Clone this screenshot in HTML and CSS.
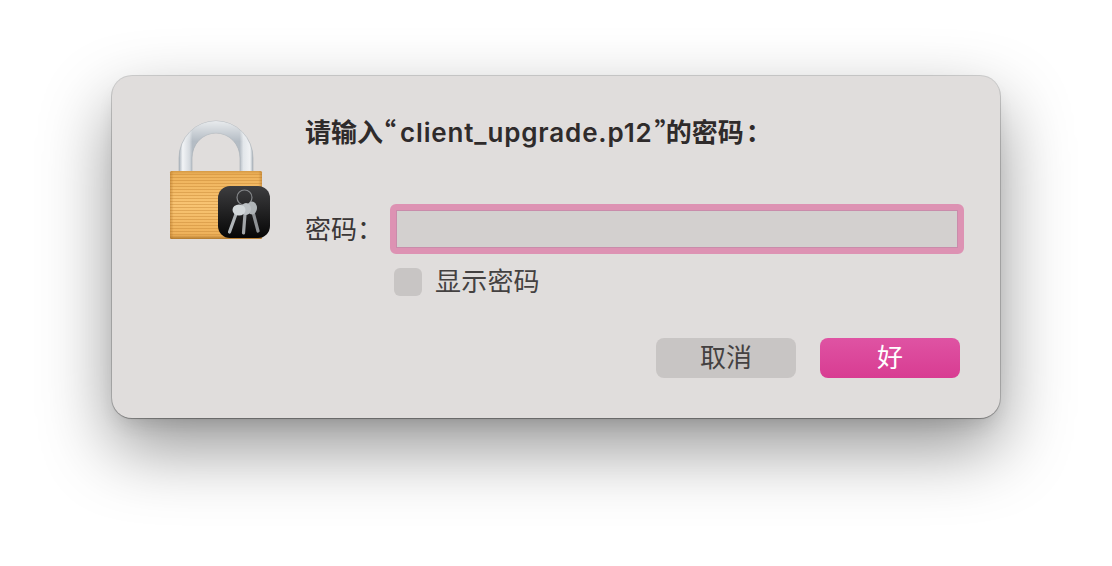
FILE: index.html
```html
<!DOCTYPE html>
<html lang="zh-CN">
<head>
  <meta charset="UTF-8">
  <title>请输入密码</title>
  <link rel="stylesheet" href="styles.css">
</head>
<body>
  <div class="dialog">
    <svg class="lock-icon" viewBox="165 118 110 125" width="110" height="125">
      <defs>
        <linearGradient id="shackle" x1="0" y1="0" x2="1" y2="0">
          <stop offset="0" stop-color="#a9b2bb"/>
          <stop offset="0.05" stop-color="#f2f4f6"/>
          <stop offset="0.14" stop-color="#d6dbe0"/>
          <stop offset="0.18" stop-color="#b4bcc4"/>
          <stop offset="0.82" stop-color="#b4bcc4"/>
          <stop offset="0.87" stop-color="#e2e6ea"/>
          <stop offset="0.96" stop-color="#f0f2f4"/>
          <stop offset="1" stop-color="#a9b2bb"/>
        </linearGradient>
        <linearGradient id="shackleTop" x1="0" y1="0" x2="0" y2="1">
          <stop offset="0" stop-color="#ffffff" stop-opacity="0.7"/>
          <stop offset="0.4" stop-color="#ffffff" stop-opacity="0"/>
        </linearGradient>
        <linearGradient id="body" x1="0" y1="0" x2="0" y2="1">
          <stop offset="0" stop-color="#d59a45"/>
          <stop offset="0.05" stop-color="#eeb25a"/>
          <stop offset="0.5" stop-color="#f8c473"/>
          <stop offset="0.94" stop-color="#eeb15a"/>
          <stop offset="1" stop-color="#b27a2e"/>
        </linearGradient>
        <linearGradient id="bodyEdge" x1="0" y1="0" x2="1" y2="0">
          <stop offset="0" stop-color="#a96c22" stop-opacity="0.45"/>
          <stop offset="0.04" stop-color="#a96c22" stop-opacity="0"/>
          <stop offset="0.96" stop-color="#a96c22" stop-opacity="0"/>
          <stop offset="1" stop-color="#a96c22" stop-opacity="0.45"/>
        </linearGradient>
        <linearGradient id="badge" x1="0" y1="0" x2="0" y2="1">
          <stop offset="0" stop-color="#3d3d3f"/>
          <stop offset="1" stop-color="#060606"/>
        </linearGradient>
        <pattern id="stripes" width="3" height="3" patternUnits="userSpaceOnUse">
          <rect width="3" height="1" fill="#c07f2e" fill-opacity="0.4"/>
        </pattern>
      </defs>
      <path d="M179 172V158a37 37 0 0 1 74 0V172H240V158a24 25 0 0 0-48 0V172Z" fill="url(#shackle)" stroke="#a4acb4" stroke-width="0.6"/>
      <path d="M179 172V158a37 37 0 0 1 74 0V172H240V158a24 25 0 0 0-48 0V172Z" fill="url(#shackleTop)"/>
      <rect x="170" y="171" width="92" height="68" rx="1.5" fill="url(#body)"/>
      <rect x="170" y="174" width="92" height="61" fill="url(#stripes)"/>
      <rect x="170" y="171" width="92" height="68" rx="1.5" fill="url(#bodyEdge)"/>
      <rect x="218" y="186" width="52" height="52" rx="12" fill="url(#badge)"/>
      <circle cx="244.500" cy="197.500" r="7.500" fill="none" stroke="#85878a" stroke-width="1.200"/>
      <path d="M253 212L258 231" stroke="#8e9295" stroke-width="3.200" stroke-linecap="round"/>
      <ellipse cx="252" cy="208" rx="5" ry="6.500" fill="#aeb3b6"/>
      <path d="M245 214L243.500 233" stroke="#a2a6a9" stroke-width="3.200" stroke-linecap="round"/>
      <ellipse cx="246" cy="209" rx="5" ry="6" fill="#bcc1c4"/>
      <path d="M236 214L229.500 232" stroke="#b0b5b8" stroke-width="3.200" stroke-linecap="round"/>
      <ellipse cx="239" cy="210" rx="6.500" ry="5.500" fill="#d3d8da"/>
    </svg>
    <form class="prompt">
      <h1 class="prompt-title">请输入<span class="quote quote-open">“</span><span class="file-name">client_upgrade.p12</span><span class="quote quote-close">”</span>的密码<span class="colon title-colon">：</span></h1>
      <div class="field-row">
        <label class="field-label" for="pw">密码<span class="colon">：</span></label>
        <span class="focus-ring"><input class="pw-input" id="pw" type="password"></span>
      </div>
      <label class="check-row">
        <span class="check-box"></span>
        <span class="check-text">显示密码</span>
      </label>
      <div class="actions">
        <button class="btn" type="button">取消</button>
        <button class="btn btn-primary" type="button">好</button>
      </div>
    </form>
  </div>
</body>
</html>
```

FILE: styles.css
```css
html, body {
  height: 100%;
}
body {
  margin: 0;
  padding: 76px 112px 0;
  box-sizing: border-box;
  background-color: #ffffff;
  overflow: hidden;
  font-family: "Noto Sans CJK SC", sans-serif;
  color: #2f2b2b;
}
.dialog {
  display: flex;
  align-items: flex-start;
  width: 888px;
  height: 342px;
  box-sizing: border-box;
  padding: 0 36px 0 53px;
  background-color: #e0dddc;
  border-radius: 20px;
  box-shadow: 0 0 0 1px rgba(0, 0, 0, 0.16), 0 1px 1px rgba(0, 0, 0, 0.2), 0 30px 70px rgba(0, 0, 0, 0.42), 0 10px 20px -6px rgba(0, 0, 0, 0.12);
}
.lock-icon {
  flex: none;
  margin-top: 42px;
}
.prompt {
  flex: 1;
  margin: 0 0 0 30px;
  padding-top: 35px;
}
.prompt-title {
  margin: 0;
  height: 41px;
  font-size: 26px;
  line-height: 39px;
  font-weight: 700;
  white-space: nowrap;
}
.file-name {
  font-family: Inter, sans-serif;
  font-weight: 600;
  letter-spacing: 0.85px;
}
.quote {
  font-feature-settings: "palt";
}
.quote-open {
  margin-right: 4px;
}
.quote-close {
  margin: 0 -2px 0 2px;
}
.colon {
  font-family: "Noto Sans CJK TC", sans-serif;
}
.title-colon {
  margin-left: 2px;
}
.field-row {
  display: flex;
  align-items: center;
  margin-top: 52px;
}
.field-label {
  width: 85px;
  padding-bottom: 4px;
  font-size: 26px;
  color: #3a3636;
}
.focus-ring {
  flex: 1;
  display: block;
  border: 6px solid #dd92b3;
  border-radius: 6px;
}
.pw-input {
  display: block;
  width: 100%;
  height: 38px;
  box-sizing: border-box;
  border: 1px solid #c98cab;
  background-color: #d3d0cf;
  outline: none;
}
.check-row {
  display: flex;
  align-items: center;
  gap: 13px;
  height: 28px;
  margin: 14px 0 0 89px;
  font-size: 26px;
  line-height: 28px;
  color: #444141;
}
.check-text {
  margin-bottom: 4px;
  letter-spacing: 0.2px;
}
.check-box {
  flex: none;
  width: 28px;
  height: 28px;
  background-color: #c8c5c4;
  border-radius: 6px;
}
.actions {
  display: flex;
  justify-content: flex-end;
  gap: 24px;
  margin: 42px 4px 0 0;
}
.btn {
  width: 140px;
  height: 40px;
  padding: 0 0 5px;
  border: none;
  border-radius: 8px;
  background-color: #c8c5c4;
  font-family: inherit;
  font-size: 26px;
  line-height: 35px;
  color: #444141;
}
.btn-primary {
  background: linear-gradient(#df53a3, #d83c92);
  color: #ffffff;
}
```
